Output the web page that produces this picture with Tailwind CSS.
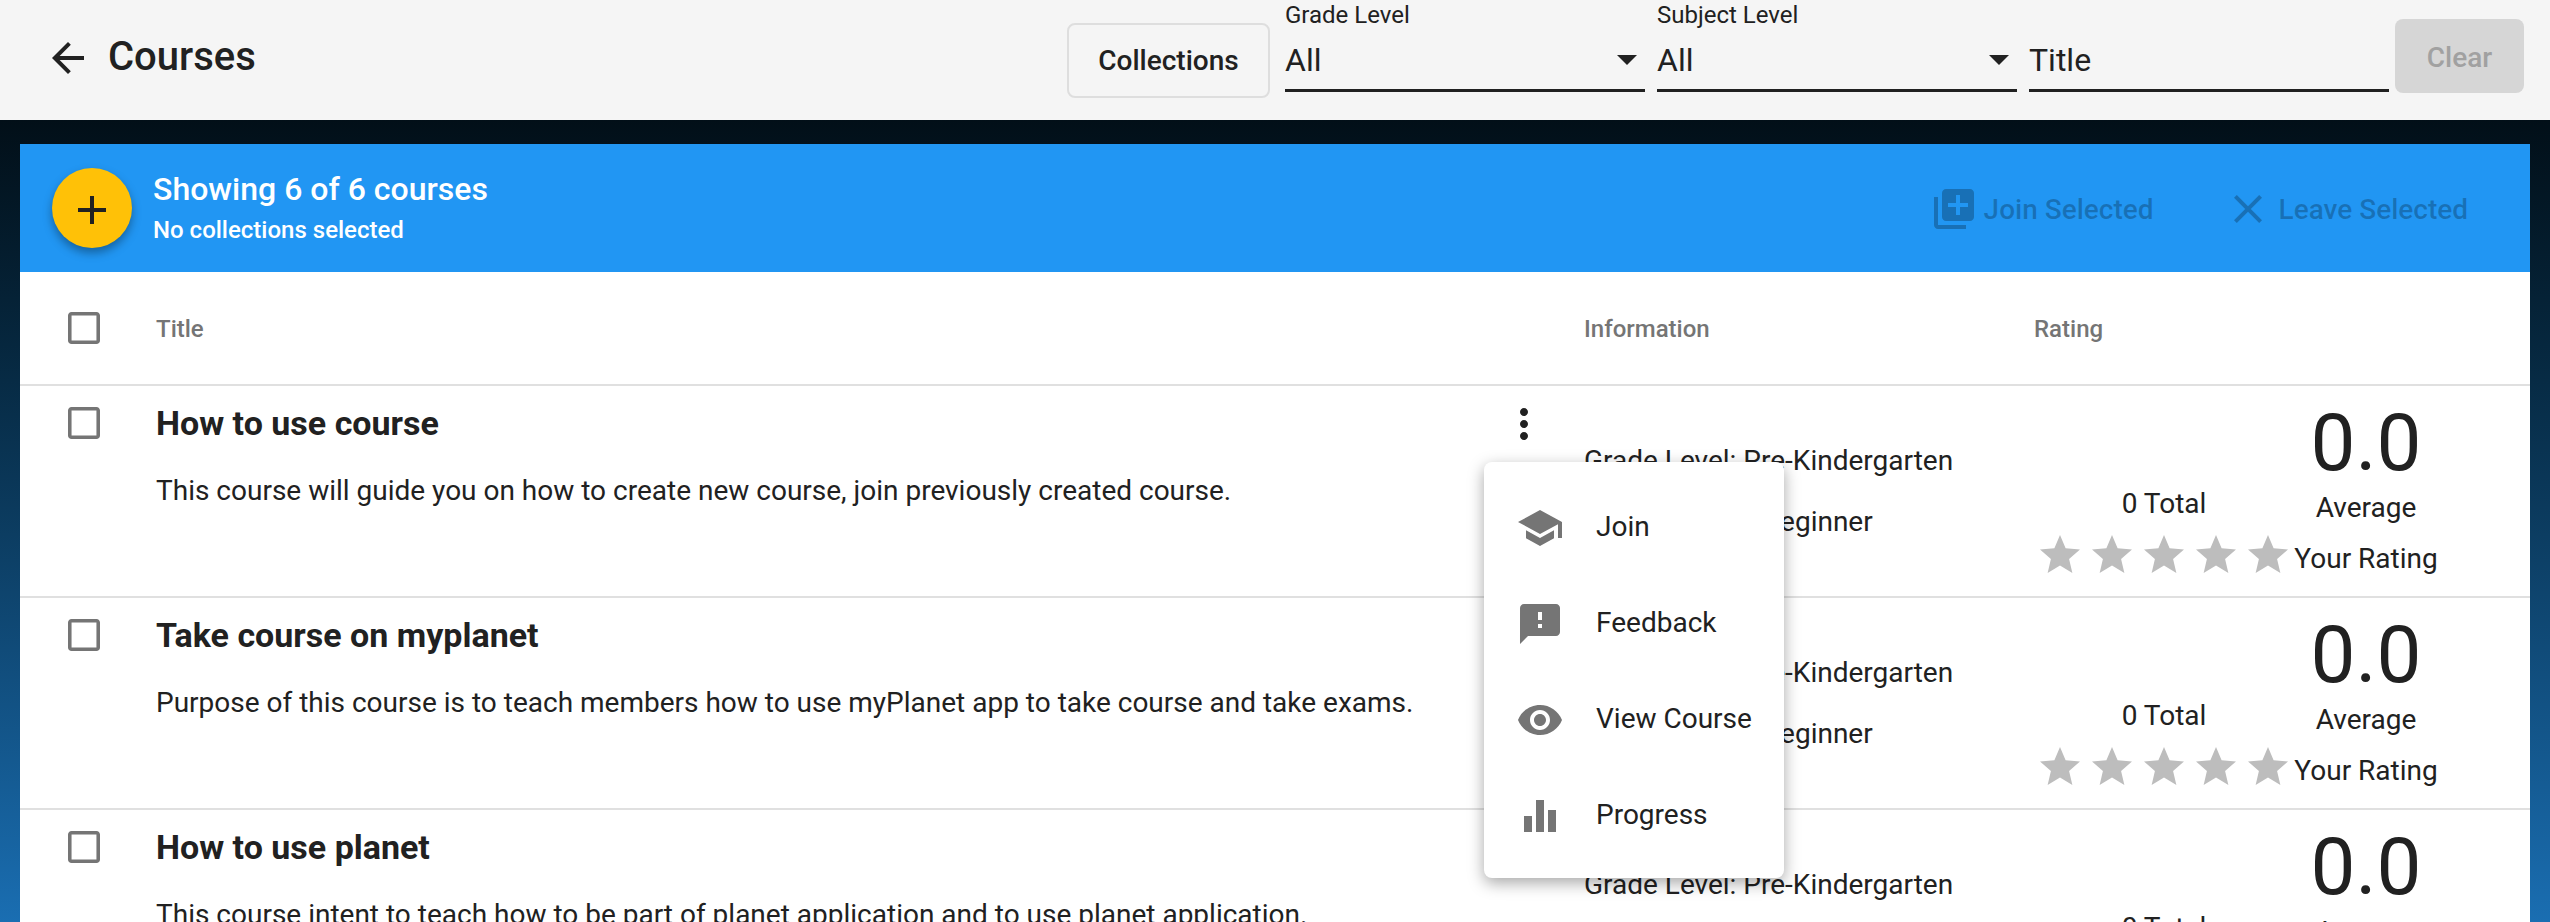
<!DOCTYPE html>
<html lang="en-us">
  <head>
    <meta charset="UTF-8" />
    <meta name="viewport" content="width=device-width, initial-scale=1.0" />
    <script src="https://cdn.jsdelivr.net/npm/@tailwindcss/browser@4"></script>
    <title>Courses</title>
  </head>

  <body class="h-screen overflow-hidden font-['Roboto',sans-serif] text-[#212121] text-[28px] leading-[40px]">
    <!-- toolbar -->
    <header class="h-[120px] bg-[#f5f5f5] flex items-center">
      <svg class="w-12 h-12 ml-[44px] -mt-1 fill-[#212121]" viewBox="0 0 24 24"><path d="M20 11H7.83l5.59-5.59L12 4l-8 8 8 8 1.41-1.41L7.83 13H20v-2z" /></svg>
      <h1 class="ml-[16px] text-[40px] font-medium leading-[48px] -mt-[6px]">Courses</h1>

      <button class="ml-auto w-[203px] h-[75px] mt-[1px] border-2 border-[#dedede] rounded-lg font-medium text-[28px]">Collections</button>

      <div class="ml-[15px] w-[360px] h-[120px] relative">
        <label class="block text-[24px] leading-[30px]">Grade Level</label>
        <div class="h-[62px] pt-[10px] border-b-[3px] border-[#212121] flex justify-between text-[32px] leading-[40px]">
          <span>All</span>
          <span class="w-0 h-0 mt-[15px] mr-[8px] border-x-[10px] border-x-transparent border-t-[10px] border-t-[#212121]"></span>
        </div>
      </div>
      <div class="ml-[12px] w-[360px] h-[120px] relative">
        <label class="block text-[24px] leading-[30px]">Subject Level</label>
        <div class="h-[62px] pt-[10px] border-b-[3px] border-[#212121] flex justify-between text-[32px] leading-[40px]">
          <span>All</span>
          <span class="w-0 h-0 mt-[15px] mr-[8px] border-x-[10px] border-x-transparent border-t-[10px] border-t-[#212121]"></span>
        </div>
      </div>
      <div class="ml-[12px] w-[360px] h-[120px] pt-[30px]">
        <div class="h-[62px] pt-[10px] border-b-[3px] border-[#212121] text-[32px] leading-[40px]">Title</div>
      </div>

      <button class="ml-[6px] mr-[26px] w-[129px] h-[74px] -mt-[8px] pt-[3px] bg-[#d6d6d6] text-[#a1a1a1] rounded-lg font-medium text-[28px]">Clear</button>
    </header>

    <main class="h-[802px] bg-linear-to-b from-[#020f18] to-[#1a6eb2] px-5 pt-6">
      <div class="bg-white relative">
        <!-- blue bar -->
        <div class="h-[128px] bg-[#2196f3] flex items-center">
          <button class="w-20 h-20 ml-8 rounded-full bg-[#ffc107] flex items-center justify-center shadow-[0_5px_10px_rgba(0,0,0,0.35)]">
            <svg class="w-12 h-12 fill-[#212121] mt-1" viewBox="0 0 24 24"><path d="M19 13h-6v6h-2v-6H5v-2h6V5h2v6h6v2z" /></svg>
          </button>
          <div class="ml-[21px] text-white font-medium">
            <div class="text-[32px] leading-[40px]">Showing 6 of 6 courses</div>
            <div class="text-[24px] leading-[36px] mt-[3px]">No collections selected</div>
          </div>
          <div class="ml-auto flex items-center text-black/25 font-medium text-[28px] mt-[2px]">
            <svg class="w-12 h-12 fill-black/25" viewBox="0 0 24 24"><path d="M4 6H2v14c0 1.1.9 2 2 2h14v-2H4V6zm16-4H8c-1.1 0-2 .9-2 2v12c0 1.1.9 2 2 2h12c1.1 0 2-.9 2-2V4c0-1.1-.9-2-2-2zm-1 9h-4v4h-2v-4H9V9h4V5h2v4h4v2z" /></svg>
            <span class="ml-[6px] mt-[1px]">Join Selected</span>
            <svg class="w-12 h-12 ml-[70px] fill-black/25" viewBox="0 0 24 24"><path d="M19 6.41L17.59 5 12 10.59 6.41 5 5 6.41 10.59 12 5 17.59 6.41 19 12 13.41 17.59 19 19 17.59 13.41 12z" /></svg>
            <span class="ml-[7px] mr-[62px] mt-[1px]">Leave Selected</span>
          </div>
        </div>

        <!-- table head -->
        <div class="h-[114px] border-b-2 border-[#e0e0e0] grid grid-cols-[136px_1428px_450px_1fr] items-center text-[#757575] font-medium text-[24px]">
          <svg class="w-8 h-8 ml-12 fill-[#757575]" viewBox="3 3 18 18"><path d="M19 5v14H5V5h14m0-2H5c-1.1 0-2 .9-2 2v14c0 1.1.9 2 2 2h14c1.1 0 2-.9 2-2V5c0-1.1-.9-2-2-2z" /></svg>
          <div class="pt-[2px]">Title</div>
          <div class="pt-[2px]">Information</div>
          <div class="pt-[2px]">Rating</div>
        </div>

        <!-- row 1 -->
        <div class="h-[212px] border-b-2 border-[#e0e0e0] grid grid-cols-[136px_1428px_450px_1fr]">
          <svg class="w-8 h-8 ml-12 mt-[21px] fill-[#757575]" viewBox="3 3 18 18"><path d="M19 5v14H5V5h14m0-2H5c-1.1 0-2 .9-2 2v14c0 1.1.9 2 2 2h14c1.1 0 2-.9 2-2V5c0-1.1-.9-2-2-2z" /></svg>
          <div class="flex justify-between pr-9">
            <div class="pt-[13px]">
              <div class="text-[34px] leading-[48px] font-bold">How to use course</div>
              <div class="mt-6">This course will guide you on how to create new course, join previously created course.</div>
            </div>
            <svg class="w-12 h-12 mt-[14px] fill-[#212121]" viewBox="0 0 24 24"><path d="M12 8c1.1 0 2-.9 2-2s-.9-2-2-2-2 .9-2 2 .9 2 2 2zm0 2c-1.1 0-2 .9-2 2s.9 2 2 2 2-.9 2-2-.9-2-2-2zm0 6c-1.1 0-2 .9-2 2s.9 2 2 2 2-.9 2-2-.9-2-2-2z" /></svg>
          </div>
          <div class="pt-[55px] flex flex-col gap-[21px]">
            <div>Grade Level: Pre-Kindergarten</div>
            <div>Subject Level: Beginner</div>
          </div>
          <div class="flex pl-[2px]">
            <div class="w-[256px] pt-[98px] flex flex-col items-center">
              <div>0 Total</div>
              <div class="flex gap-1 mt-[7px]">
                <svg class="w-12 h-12 fill-[#bdbdbd]" viewBox="0 0 24 24"><path d="M12 17.27L18.18 21l-1.64-7.03L22 9.24l-7.19-.61L12 2 9.19 8.63 2 9.24l5.46 4.73L5.82 21z" /></svg>
                <svg class="w-12 h-12 fill-[#bdbdbd]" viewBox="0 0 24 24"><path d="M12 17.27L18.18 21l-1.64-7.03L22 9.24l-7.19-.61L12 2 9.19 8.63 2 9.24l5.46 4.73L5.82 21z" /></svg>
                <svg class="w-12 h-12 fill-[#bdbdbd]" viewBox="0 0 24 24"><path d="M12 17.27L18.18 21l-1.64-7.03L22 9.24l-7.19-.61L12 2 9.19 8.63 2 9.24l5.46 4.73L5.82 21z" /></svg>
                <svg class="w-12 h-12 fill-[#bdbdbd]" viewBox="0 0 24 24"><path d="M12 17.27L18.18 21l-1.64-7.03L22 9.24l-7.19-.61L12 2 9.19 8.63 2 9.24l5.46 4.73L5.82 21z" /></svg>
                <svg class="w-12 h-12 fill-[#bdbdbd]" viewBox="0 0 24 24"><path d="M12 17.27L18.18 21l-1.64-7.03L22 9.24l-7.19-.61L12 2 9.19 8.63 2 9.24l5.46 4.73L5.82 21z" /></svg>
              </div>
            </div>
            <div class="w-[148px] pt-[15px] flex flex-col items-center">
              <div class="text-[80px] leading-[84px]">0.0</div>
              <div class="mt-[3px]">Average</div>
              <div class="mt-[11px] whitespace-nowrap">Your Rating</div>
            </div>
          </div>
        </div>

        <!-- row 2 -->
        <div class="h-[212px] border-b-2 border-[#e0e0e0] grid grid-cols-[136px_1428px_450px_1fr]">
          <svg class="w-8 h-8 ml-12 mt-[21px] fill-[#757575]" viewBox="3 3 18 18"><path d="M19 5v14H5V5h14m0-2H5c-1.1 0-2 .9-2 2v14c0 1.1.9 2 2 2h14c1.1 0 2-.9 2-2V5c0-1.1-.9-2-2-2z" /></svg>
          <div class="flex justify-between pr-9">
            <div class="pt-[13px]">
              <div class="text-[34px] leading-[48px] font-bold">Take course on myplanet</div>
              <div class="mt-6">Purpose of this course is to teach members how to use myPlanet app to take course and take exams.</div>
            </div>
          </div>
          <div class="pt-[55px] flex flex-col gap-[21px]">
            <div>Grade Level: Pre-Kindergarten</div>
            <div>Subject Level: Beginner</div>
          </div>
          <div class="flex pl-[2px]">
            <div class="w-[256px] pt-[98px] flex flex-col items-center">
              <div>0 Total</div>
              <div class="flex gap-1 mt-[7px]">
                <svg class="w-12 h-12 fill-[#bdbdbd]" viewBox="0 0 24 24"><path d="M12 17.27L18.18 21l-1.64-7.03L22 9.24l-7.19-.61L12 2 9.19 8.63 2 9.24l5.46 4.73L5.82 21z" /></svg>
                <svg class="w-12 h-12 fill-[#bdbdbd]" viewBox="0 0 24 24"><path d="M12 17.27L18.18 21l-1.64-7.03L22 9.24l-7.19-.61L12 2 9.19 8.63 2 9.24l5.46 4.73L5.82 21z" /></svg>
                <svg class="w-12 h-12 fill-[#bdbdbd]" viewBox="0 0 24 24"><path d="M12 17.27L18.18 21l-1.64-7.03L22 9.24l-7.19-.61L12 2 9.19 8.63 2 9.24l5.46 4.73L5.82 21z" /></svg>
                <svg class="w-12 h-12 fill-[#bdbdbd]" viewBox="0 0 24 24"><path d="M12 17.27L18.18 21l-1.64-7.03L22 9.24l-7.19-.61L12 2 9.19 8.63 2 9.24l5.46 4.73L5.82 21z" /></svg>
                <svg class="w-12 h-12 fill-[#bdbdbd]" viewBox="0 0 24 24"><path d="M12 17.27L18.18 21l-1.64-7.03L22 9.24l-7.19-.61L12 2 9.19 8.63 2 9.24l5.46 4.73L5.82 21z" /></svg>
              </div>
            </div>
            <div class="w-[148px] pt-[15px] flex flex-col items-center">
              <div class="text-[80px] leading-[84px]">0.0</div>
              <div class="mt-[3px]">Average</div>
              <div class="mt-[11px] whitespace-nowrap">Your Rating</div>
            </div>
          </div>
        </div>

        <!-- row 3 -->
        <div class="h-[212px] border-b-2 border-[#e0e0e0] grid grid-cols-[136px_1428px_450px_1fr]">
          <svg class="w-8 h-8 ml-12 mt-[21px] fill-[#757575]" viewBox="3 3 18 18"><path d="M19 5v14H5V5h14m0-2H5c-1.1 0-2 .9-2 2v14c0 1.1.9 2 2 2h14c1.1 0 2-.9 2-2V5c0-1.1-.9-2-2-2z" /></svg>
          <div class="flex justify-between pr-9">
            <div class="pt-[13px]">
              <div class="text-[34px] leading-[48px] font-bold">How to use planet</div>
              <div class="mt-6">This course intent to teach how to be part of planet application and to use planet application.</div>
            </div>
          </div>
          <div class="pt-[55px] flex flex-col gap-[21px]">
            <div>Grade Level: Pre-Kindergarten</div>
            <div>Subject Level: Beginner</div>
          </div>
          <div class="flex pl-[2px]">
            <div class="w-[256px] pt-[98px] flex flex-col items-center">
              <div>0 Total</div>
            </div>
            <div class="w-[148px] pt-[15px] flex flex-col items-center">
              <div class="text-[80px] leading-[84px]">0.0</div>
              <div class="mt-[3px]">Average</div>
            </div>
          </div>
        </div>

        <!-- row menu -->
        <div class="absolute left-[1464px] top-[318px] w-[300px] pt-[18px] pb-[14px] bg-white rounded-lg shadow-[0_5px_16px_rgba(0,0,0,0.35)]">
          <div class="h-24 pl-8 flex items-center gap-8">
            <svg class="w-12 h-12 fill-[#757575]" viewBox="0 0 24 24"><path d="M5 13.18v4L12 21l7-3.82v-4L12 17l-7-3.82zM12 3L1 9l11 6 9-4.91V17h2V9L12 3z" /></svg>
            <span class="-mt-[2px]">Join</span>
          </div>
          <div class="h-24 pl-8 flex items-center gap-8">
            <svg class="w-12 h-12 fill-[#757575]" viewBox="0 0 24 24"><path d="M20 2H4c-1.1 0-1.99.9-1.99 2L2 22l4-4h14c1.1 0 2-.9 2-2V4c0-1.1-.9-2-2-2zm-7 12h-2v-2h2v2zm0-4h-2V6h2v4z" /></svg>
            <span class="-mt-[2px]">Feedback</span>
          </div>
          <div class="h-24 pl-8 flex items-center gap-8">
            <svg class="w-12 h-12 fill-[#757575]" viewBox="0 0 24 24"><path d="M12 4.5C7 4.5 2.73 7.61 1 12c1.73 4.39 6 7.5 11 7.5s9.27-3.11 11-7.5c-1.73-4.39-6-7.5-11-7.5zM12 17c-2.76 0-5-2.24-5-5s2.24-5 5-5 5 2.24 5 5-2.24 5-5 5zm0-8c-1.66 0-3 1.34-3 3s1.34 3 3 3 3-1.34 3-3-1.34-3-3-3z" /></svg>
            <span class="-mt-[2px]">View Course</span>
          </div>
          <div class="h-24 pl-8 flex items-center gap-8">
            <svg class="w-12 h-12 fill-[#757575]" viewBox="0 0 24 24"><path d="M10 20h4V4h-4v16zm-6 0h4v-8H4v8zM16 9v11h4V9h-4z" /></svg>
            <span class="-mt-[2px]">Progress</span>
          </div>
        </div>
      </div>
    </main>
  </body>
</html>
